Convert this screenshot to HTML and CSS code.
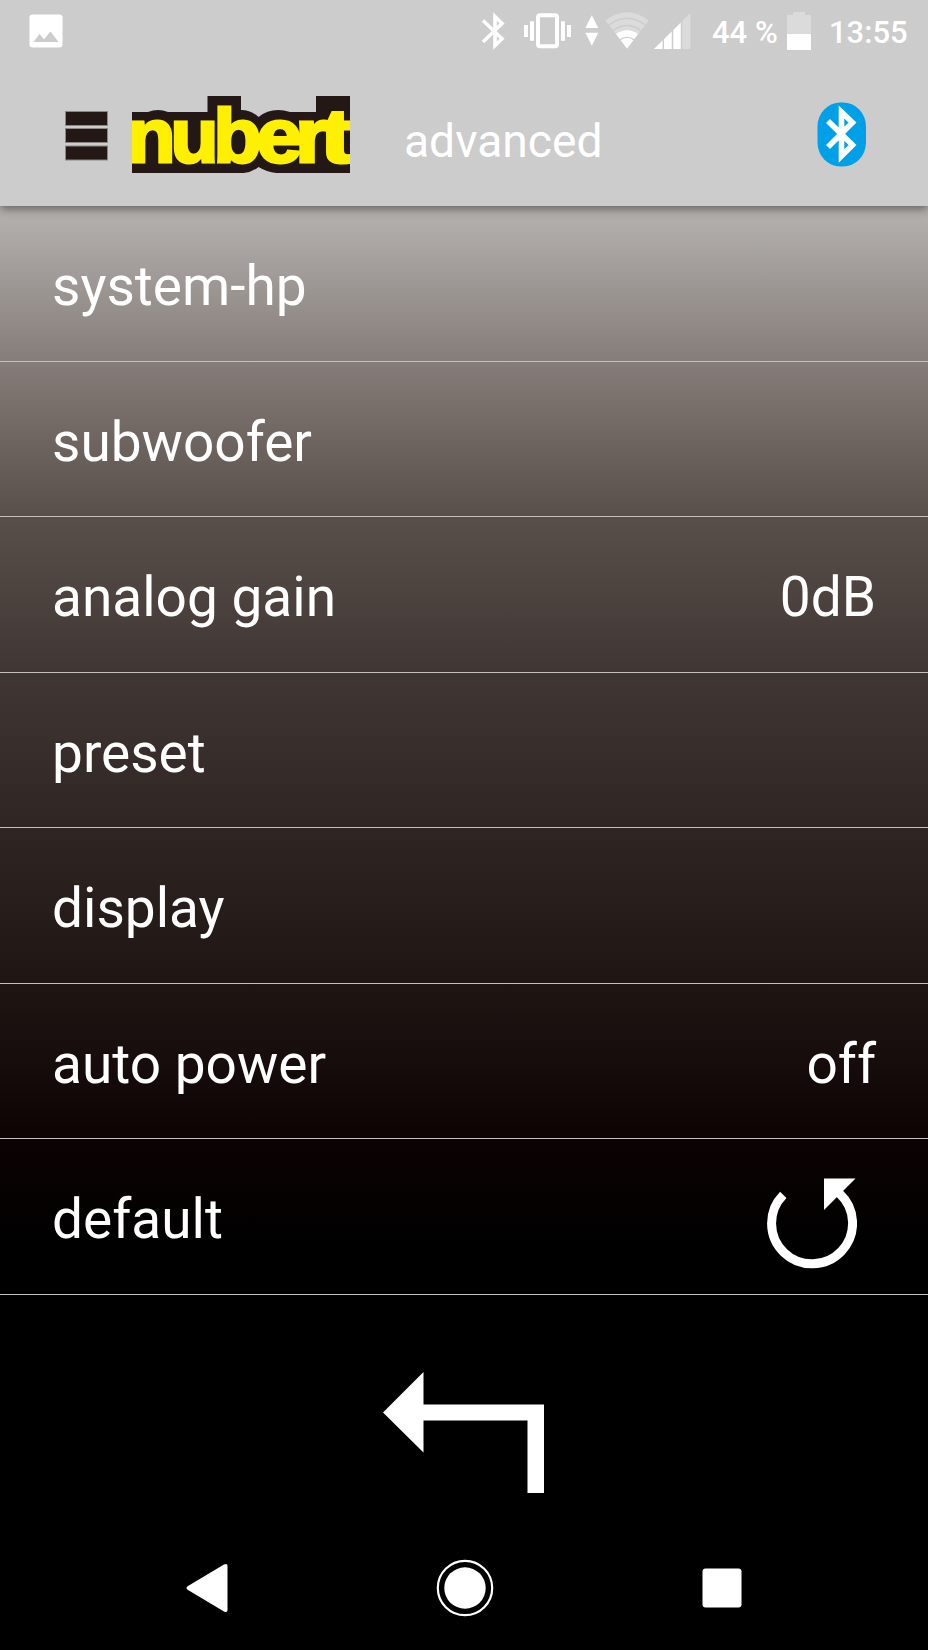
FILE: index.html
```html
<!DOCTYPE html>
<html lang="en">
<head>
    <meta charset="UTF-8">
    <meta name="viewport" content="width=device-width, initial-scale=1.0">
    <title>nubert - advanced</title>
    <link rel="stylesheet" href="styles.css">
</head>
<body>
    <header class="top">
        <div class="status-bar">
            <svg class="picture-icon" width="34" height="34" viewBox="0 0 34 34">
                <rect x="0.5" y="0.5" width="33" height="33" rx="3" fill="#fff"/>
                <path d="M4.5 28 10.5 20 15 25.5 21.5 17.5 29.5 28z" fill="#ccc"/>
            </svg>
            <svg class="status-icons" width="220" height="44" viewBox="0 0 220 44" fill="#fff">
                <!-- bluetooth -->
                <path d="M2 10.5 21 28.8 14 35.5V6.5L21 13.5 2 32" fill="none" stroke="#fff" stroke-width="3.6"/>
                <!-- vibrate -->
                <rect x="57" y="5.3" width="19" height="31" rx="2" fill="none" stroke="#fff" stroke-width="4"/>
                <path d="M43 15h4v12h-4zM49 11.3h4v19.4h-4zM80 11.3h4v19.4h-4zM86 15h4v12h-4z"/>
                <!-- data arrows -->
                <path d="M104.3 18h13L110.8 5.3zM104.3 22.8h13l-6.5 13z"/>
                <!-- wifi -->
                <path d="M124.5 10.5Q146-6 167.7 10.5L146 39z" fill="#dbdbdb"/>
                <path d="M128 14.8Q146 1.5 164 14.8M132 20.5Q146 10.5 160 20.5" fill="none" stroke="#ccc" stroke-width="1.5"/>
                <path d="M135 24Q146 16.500 157 24L146 38.5z"/>
                <path d="M138.5 30Q146 24.5 153.5 30" fill="none" stroke="#ccc" stroke-width="1.2"/>
                <!-- mobile signal -->
                <path d="M209.3 3v36H173z" fill="#dbdbdb"/>
                <path d="M200.5 12v27H173z"/>
                <path d="M182.3 20v19M191.5 10v29M200.5 8v31" stroke="#ccc" stroke-width="1.5"/>
            </svg>
            <span class="battery-text">44 %</span>
            <svg class="battery-icon" width="24" height="38" viewBox="0 0 24 38">
                <path d="M0 3h6V0h12v3h6v19H0z" fill="#dbdbdb"/>
                <path d="M0 22h24v16H0z" fill="#fff"/>
            </svg>
            <span class="clock">13:55</span>
        </div>
        <div class="app-bar">
            <svg class="menu-icon" width="43" height="50" viewBox="0 0 43 50">
                <g fill="#231815" stroke="#8c8786">
                    <rect x="0.5" y="0.5" width="42" height="14"/>
                    <rect x="0.5" y="17.5" width="42" height="14"/>
                    <rect x="0.5" y="35" width="42" height="14"/>
                </g>
            </svg>
            <svg class="logo" width="218" height="77" viewBox="0 0 218 77">
                <path d="M0 16H16Q26 12 36 16H75.500V0H109V14Q119 14 126.500 21Q135 14 146 14Q152 14 158 16H184V0H218V77H158Q140 79 126.500 71Q118 78 106 77H0z" fill="#231815"/>
                <g class="logo-text">
                    <text x="-4.5" y="65.5" textLength="48" lengthAdjust="spacingAndGlyphs">n</text>
                    <text x="38.5" y="65.5" textLength="48" lengthAdjust="spacingAndGlyphs">u</text>
                    <text x="81.5" y="65.5" textLength="48" lengthAdjust="spacingAndGlyphs">b</text>
                    <text x="124.500" y="65.5" textLength="46" lengthAdjust="spacingAndGlyphs">e</text>
                    <text x="163" y="65.5" textLength="34" lengthAdjust="spacingAndGlyphs">r</text>
                    <text x="188" y="65.5" textLength="34" lengthAdjust="spacingAndGlyphs">t</text>
                </g>
            </svg>
            <h1 class="title">advanced</h1>
            <svg class="bluetooth" width="50" height="65" viewBox="0 0 50 65">
                <rect x="0.5" y="0.5" width="48.5" height="64" rx="23" ry="24" fill="#00a0e9"/>
                <path d="M11 19 35.5 43 24.500 54V10L35.500 20.500 11 45" fill="none" stroke="#fff" stroke-width="5.6"/>
            </svg>
        </div>
    </header>

    <ul class="settings">
        <li class="row"><span>system-hp</span></li>
        <li class="row"><span>subwoofer</span></li>
        <li class="row"><span>analog gain</span><span>0dB</span></li>
        <li class="row"><span>preset</span></li>
        <li class="row"><span>display</span></li>
        <li class="row"><span>auto power</span><span>off</span></li>
        <li class="row">
            <span>default</span>
            <svg class="reset-icon" width="90" height="91" viewBox="0 0 90 91">
                <path d="M16.3 16.8A40.5 40.5 0 1 0 72.5 15.5" fill="none" stroke="#fff" stroke-width="9"/>
                <path d="M57 0.5H88.5L57 32z" fill="#fff"/>
            </svg>
        </li>
    </ul>

    <div class="back">
        <svg width="161" height="121" viewBox="0 0 161 121">
            <path d="M0 40.5 40.5 0V32.5H161V121H144.5V48.5H40.5V80.5z" fill="#fff"/>
        </svg>
    </div>

    <nav class="nav-bar">
        <svg width="42" height="50" viewBox="0 0 42 50">
            <path d="M2 23 38 1.5Q41.5 0 41.5 3V47Q41.5 50 38 48.5L2 27Q-1 25 2 23z" fill="#fff"/>
        </svg>
        <svg width="58" height="58" viewBox="0 0 58 58">
            <circle cx="29" cy="29" r="27.2" fill="none" stroke="#fff" stroke-width="2.2"/>
            <circle cx="29" cy="29" r="20.7" fill="#fff"/>
        </svg>
        <svg width="40" height="40" viewBox="0 0 40 40">
            <rect x="0.5" y="0.5" width="39" height="39" rx="3" fill="#fff"/>
        </svg>
    </nav>
</body>
</html>
```

FILE: styles.css
```css
* {
    box-sizing: border-box;
}
body {
    margin: 0;
    width: 928px;
    height: 1650px;
    overflow: hidden;
    font-family: Roboto, sans-serif;
    color: #fff;
    background: #000;
}
svg {
    display: block;
    flex: none;
}
.top {
    position: relative;
    height: 206px;
    background: #ccc;
    box-shadow: 0 3px 9px rgba(0, 0, 0, 0.45);
}
.status-bar {
    display: flex;
    align-items: flex-start;
    height: 70px;
    padding-left: 29px;
    font-size: 31px;
    font-weight: 500;
    line-height: 36px;
    white-space: nowrap;
}
.picture-icon {
    margin-top: 14px;
}
.status-icons {
    margin: 10px 0 0 418px;
}
.battery-text {
    width: 75px;
    margin: 15px 0 0 11px;
}
.battery-icon {
    margin-top: 12px;
}
.clock {
    margin: 15px 0 0 18px;
}
.app-bar {
    display: flex;
    align-items: flex-start;
    height: 136px;
    padding-left: 65px;
}
.menu-icon {
    margin-top: 41px;
}
.logo {
    margin: 26px 0 0 24px;
}
.logo-text {
    font: bold 76px "Liberation Sans", sans-serif;
    fill: #fff000;
    stroke: #fff000;
    stroke-width: 3px;
}
.title {
    margin: 44px 0 0 54px;
    width: 413px;
    font-size: 46.2px;
    font-weight: 400;
    line-height: 54px;
}
.bluetooth {
    margin-top: 31.5px;
}
.settings {
    margin: 0;
    padding: 0;
    list-style: none;
    background: linear-gradient(#b5b1af 0, #b0acaa 20px, #857d79 155px, #584e4a 311px, #403633 466px, #2f2623 622px, #1f1614 777px, #0c0303 933px, #000 1040px);
}
.row {
    display: flex;
    justify-content: space-between;
    height: 155.5px;
    padding: 48px 52px 0;
    font-size: 55px;
    line-height: 64px;
    border-bottom: 1px solid #c4c0be;
}
.reset-icon {
    margin: -9px 19px 0 0;
}
.back {
    padding: 77px 0 0 383px;
    height: 232px;
}
.nav-bar {
    display: flex;
    justify-content: space-between;
    align-items: center;
    height: 122px;
    padding: 0 186px;
}
```
